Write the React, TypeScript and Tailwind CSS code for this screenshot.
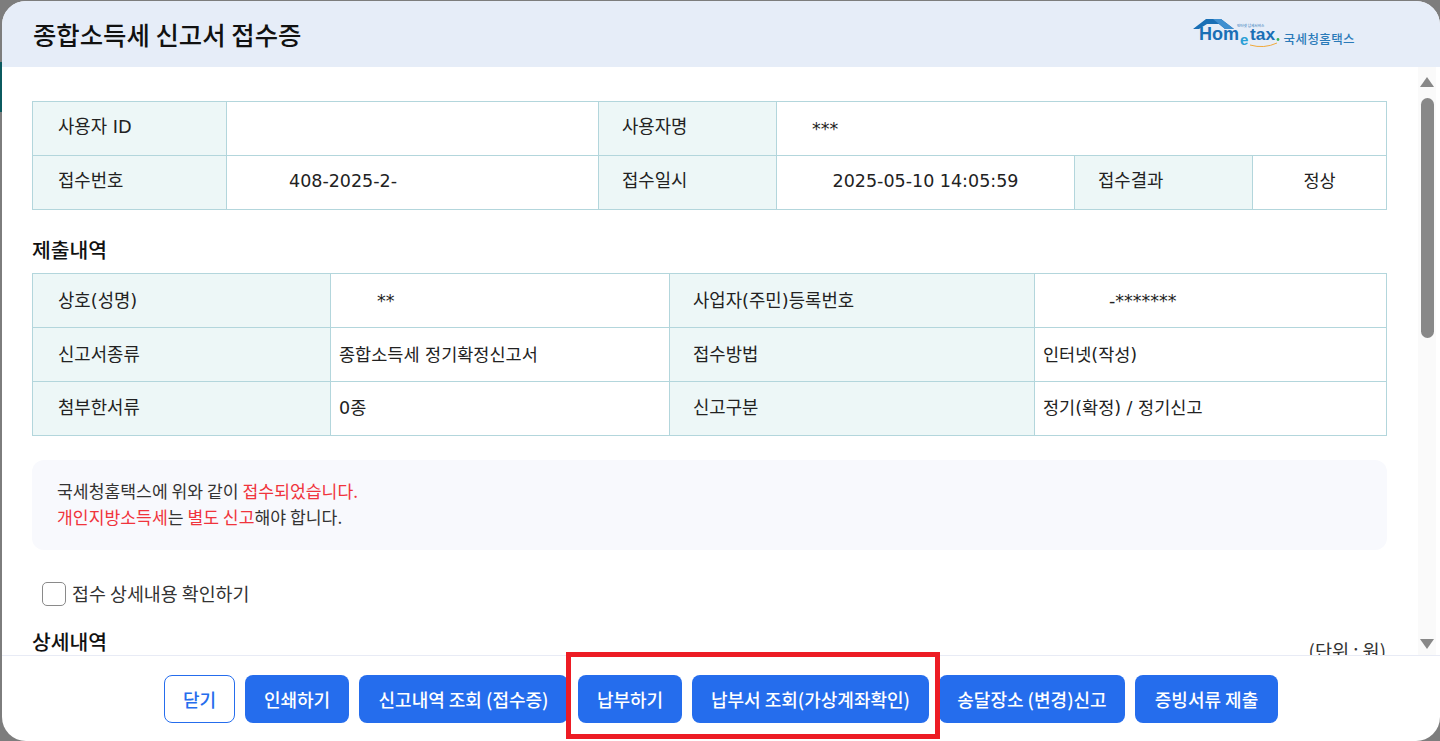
const font = { fontFamily: '"Noto Sans CJK KR", "Noto Sans", sans-serif' };
const cellFont = { fontFamily: '"DejaVu Sans", "Noto Sans CJK KR", sans-serif' };

const th = "border border-[#b3d6dc] bg-[#edf7f7] pl-[25px] text-left text-[17.8px] font-normal leading-[24px] text-[#222]";
const th2 = "border border-[#b3d6dc] bg-[#edf7f7] pl-[23px] text-left text-[17.8px] font-normal leading-[24px] text-[#222]";
const td = "border border-[#b3d6dc] bg-white text-[17.5px] leading-[24px] text-[#222]";

const Logo = () => (
  <div className="flex items-end">
    <svg width="90" height="34" viewBox="0 0 90 34" className="block">
      <path d="M1 12 L14 2 H29 L42 12 H33 L27 7 H15 L7 12 Z" fill="#1a6fb5" />
      <path d="M21 2 H29 L42 12 H33 Z" fill="#3f8fd0" />
      <text x="7" y="23" fontSize="18" fontWeight="700" fill="#1a6fb5" fontFamily="Liberation Sans, sans-serif" textLength="40" lengthAdjust="spacingAndGlyphs">Hom</text>
      <text x="48" y="28" fontSize="15" fontWeight="700" fill="#2a9fd6" fontFamily="Liberation Sans, sans-serif">e</text>
      <text x="58" y="23" fontSize="17" fontWeight="700" fill="#1a6fb5" fontFamily="Liberation Sans, sans-serif" textLength="25" lengthAdjust="spacingAndGlyphs">tax</text>
      <circle cx="86" cy="22.5" r="1.4" fill="#35b05a" />
      <path d="M58 28 Q72 32 85 26" fill="none" stroke="#f0a93c" strokeWidth="1" />
      <text x="45" y="10" fontSize="3.6" fill="#1a6fb5" style={font}>인터넷 납세서비스</text>
    </svg>
    <span className="ml-[2px] mb-[4px] text-[12.5px] font-medium leading-[16px] tracking-[0.4px] text-[#2a7ab8]">국세청홈택스</span>
  </div>
);

const btn = "flex h-12 items-center justify-center rounded-lg bg-[#256ded] text-[18px] font-medium text-white";

export default function App() {
  return (
    <div className="relative h-[741px] w-[1440px] overflow-hidden bg-[#7d7d7d]" style={font}>
      <div className="absolute left-0 top-[62px] h-[50px] w-[2px] bg-[#0b5a5f]" />
      <div className="ml-[2px] mt-[1px] flex h-[740px] flex-col overflow-hidden rounded-[24px] bg-white">
        <header className="flex h-[66px] shrink-0 items-center justify-between bg-[#e6edf8] pl-[31px] pr-[85px]">
          <h1 className="text-[25.4px] font-medium text-[#111]">종합소득세 신고서 접수증</h1>
          <Logo />
        </header>

        <div className="flex min-h-0 flex-1">
          <main className="min-w-0 flex-1 overflow-hidden pl-[30px] pr-[31px] pt-[34px]">
            <table className="h-[109px] w-[1354px] table-fixed border-collapse" style={cellFont}>
              <colgroup>
                <col className="w-[194px]" />
                <col className="w-[372px]" />
                <col className="w-[178px]" />
                <col className="w-[298px]" />
                <col className="w-[178px]" />
                <col className="w-[134px]" />
              </colgroup>
              <tbody>
                <tr className="h-[54px]">
                  <th className={th + " pb-[3px]"}>사용자 ID</th>
                  <td className={td} />
                  <th className={th2 + " pb-[3px]"}>사용자명</th>
                  <td className={td + " pl-[35px]"} colSpan={3}>***</td>
                </tr>
                <tr className="h-[54px]">
                  <th className={th + " pb-[3px]"}>접수번호</th>
                  <td className={td + " pl-[62px] pb-[3px]"}>408-2025-2-</td>
                  <th className={th2 + " pb-[3px]"}>접수일시</th>
                  <td className={td + " text-center pb-[3px]"}>2025-05-10 14:05:59</td>
                  <th className={th2 + " pb-[3px]"}>접수결과</th>
                  <td className={td + " text-center pb-[3px]"}>정상</td>
                </tr>
              </tbody>
            </table>

            <h2 className="mt-[25px] text-[20.4px] font-medium leading-[28px] text-[#111]">제출내역</h2>
            <table className="mt-[10px] h-[163px] w-[1354px] table-fixed border-collapse" style={cellFont}>
              <colgroup>
                <col className="w-[298px]" />
                <col className="w-[339px]" />
                <col className="w-[365px]" />
                <col className="w-[352px]" />
              </colgroup>
              <tbody>
                <tr className="h-[54px]">
                  <th className={th}>상호(성명)</th>
                  <td className={td + " pl-[46px]"}>**</td>
                  <th className={th2}>사업자(주민)등록번호</th>
                  <td className={td + " pl-[74px]"}>-*******</td>
                </tr>
                <tr className="h-[54px]">
                  <th className={th}>신고서종류</th>
                  <td className={td + " pl-[8px]"}>종합소득세 정기확정신고서</td>
                  <th className={th2}>접수방법</th>
                  <td className={td + " pl-[8px]"}>인터넷(작성)</td>
                </tr>
                <tr className="h-[54px]">
                  <th className={th + " pb-[2px]"}>첨부한서류</th>
                  <td className={td + " pl-[8px] pb-[2px]"}>0종</td>
                  <th className={th2 + " pb-[2px]"}>신고구분</th>
                  <td className={td + " pl-[8px] pb-[2px]"}>정기(확정) / 정기신고</td>
                </tr>
              </tbody>
            </table>

            <div className="mt-[24px] h-[90px] rounded-xl bg-[#f8f9fd] px-[25px] py-[18px] text-[17.2px] leading-[26px] text-[#333]">
              <p>국세청홈택스에 위와 같이 <span className="text-[#f0343c]">접수되었습니다.</span></p>
              <p>
                <span className="text-[#f0343c]">개인지방소득세</span>는 <span className="text-[#f0343c]">별도 신고</span>해야 합니다.
              </p>
            </div>

            <label className="ml-[10px] mt-[31px] flex h-[25px] items-center gap-[6px] text-[18.4px] leading-[23px] text-[#333]">
              <span className="h-6 w-6 rounded-[5px] border border-[#8a8a8a] bg-white" />
              접수 상세내용 확인하기
            </label>

            <div className="mt-[21px] flex items-start justify-between">
              <h2 className="text-[20.4px] font-medium leading-[28px] text-[#111]">상세내역</h2>
              <span className="mr-[1px] mt-[10px] text-[18.6px] leading-[26px] text-[#333]">(단위 : 원)</span>
            </div>
          </main>

          <aside className="mr-[4px] flex w-[18px] shrink-0 flex-col items-center bg-[#fafafa] pt-[10px]">
            <svg width="14" height="11" viewBox="0 0 14 11"><path d="M7 0 L14 10 H0 Z" fill="#888" /></svg>
            <div className="mt-[10px] h-[240px] w-[13px] rounded-full bg-[#888]" />
            <div className="flex-1" />
            <svg width="14" height="11" viewBox="0 0 14 11" className="mb-[5px]"><path d="M0 0 H14 L7 10 Z" fill="#888" /></svg>
          </aside>
        </div>

        <footer className="flex h-[86px] shrink-0 items-start gap-[10px] border-t border-[#e8ebf5] pl-[162px] pt-[19px]">
          <button className="flex h-12 w-[71px] items-center justify-center rounded-lg border border-[#256ded] bg-white text-[18px] font-medium text-[#256ded]">닫기</button>
          <button className={btn + " w-[104px]"}>인쇄하기</button>
          <button className={btn + " w-[209px]"}>신고내역 조회 (접수증)</button>
          <button className={btn + " w-[104px]"}>납부하기</button>
          <button className={btn + " w-[237px]"}>납부서 조회(가상계좌확인)</button>
          <button className={btn + " w-[186px]"}>송달장소 (변경)신고</button>
          <button className={btn + " w-[143px]"}>증빙서류 제출</button>
        </footer>
      </div>

      <div className="absolute left-[566px] top-[652px] h-[87px] w-[374px] border-[5px] border-[#ed1c24]" />
    </div>
  );
}
